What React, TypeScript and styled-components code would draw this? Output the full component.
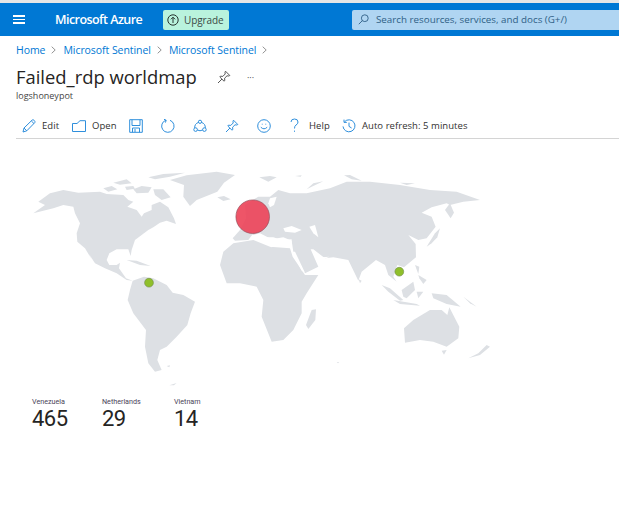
import styled, { createGlobalStyle } from "styled-components";

const GlobalStyle = createGlobalStyle`
    html, body {
        margin: 0;
        padding: 0;
        background: #fff;
    }
    body {
        font-family: "Open Sans", "Liberation Sans", sans-serif;
        color: #323130;
        overflow: hidden;
    }
`;

const Page = styled.div`
    width: 619px;
    height: 508px;
    border-top: 3px solid #e6e6e6;
    box-sizing: border-box;
    overflow: hidden;
`;

const TopBar = styled.header`
    height: 33px;
    background: #0078d4;
    display: flex;
    align-items: center;
`;

const Burger = styled.div`
    width: 12px;
    margin-left: 13px;
    display: flex;
    flex-direction: column;
    gap: 2px;

    span {
        height: 1.5px;
        background: #fff;
    }
`;

const Brand = styled.div`
    margin-left: 30px;
    width: 108px;
    font-family: "Open Sans", sans-serif;
    font-size: 12.5px;
    font-weight: 600;
    letter-spacing: -0.55px;
    color: #fff;
`;

const Upgrade = styled.div`
    width: 66px;
    height: 20px;
    box-sizing: border-box;
    padding-left: 4px;
    background: #b9f3dd;
    border-radius: 2px;
    display: flex;
    align-items: center;
    gap: 5px;
    font-size: 10px;
    letter-spacing: -0.1px;
    color: #3b4a46;
`;

const Search = styled.div`
    margin-left: 123px;
    flex: 1;
    height: 20px;
    background: #b0d5f2;
    border-radius: 2px 0 0 2px;
    display: flex;
    align-items: center;
    padding-left: 6px;
    gap: 7px;
    font-size: 9.8px;
    color: #2f5f86;
`;

const Content = styled.main`
    padding-left: 16px;
`;

const Breadcrumbs = styled.nav`
    height: 28px;
    display: flex;
    align-items: center;
    font-size: 10.5px;
    letter-spacing: -0.06px;
    color: #0078d4;
`;

const Chevron = styled.svg`
    margin: 0 7px 0 6px;
`;

const TitleRow = styled.div`
    display: flex;
    align-items: center;
    height: 26px;
`;

const Title = styled.h1`
    margin: 0;
    width: 201px;
    font-size: 18.4px;
    font-weight: 400;
    line-height: 26px;
    color: #252423;
`;

const Ellipsis = styled.span`
    margin-left: 16px;
    font-size: 9px;
    line-height: 9px;
    color: #444;
`;

const Subtitle = styled.div`
    font-size: 9px;
    line-height: 11px;
    color: #444;
`;

const Toolbar = styled.div`
    margin-top: 14px;
    height: 23px;
    border-bottom: 1px solid #d4d4d4;
    display: flex;
    align-items: flex-start;
    padding: 0 0 0 6px;
`;

const ToolButton = styled.div<{ $width: number }>`
    width: ${(props) => props.$width}px;
    height: 21px;
    flex: none;
    display: flex;
    align-items: center;
    gap: 6px;
    font-size: 9.5px;
    letter-spacing: 0.05px;
    color: #323130;
    white-space: nowrap;
`;

const MapChart = styled.svg`
    display: block;
    margin: 11px 0 0 -16px;
`;

const Tiles = styled.div`
    display: flex;
    margin-top: 8px;
    padding-left: 16px;
    font-family: Roboto, "Open Sans", sans-serif;
`;

const Tile = styled.div<{ $width: number }>`
    width: ${(props) => props.$width}px;
`;

const TileLabel = styled.div`
    font-size: 7.2px;
    line-height: 8px;
    letter-spacing: -0.02px;
    color: #4a4458;
`;

const TileValue = styled.div`
    font-size: 22px;
    line-height: 26px;
    letter-spacing: -0.5px;
    color: #252423;
`;

const land = "#dde0e4";
const icon = { fill: "none", stroke: "#2f8fdc", strokeWidth: 1 };

// traced from the picture, coordinates are 3x page pixels
const westLand = [
    "40,190 75,165 55,155 90,130 130,120 175,128 240,125 260,132 310,135 325,150 340,155 322,170 350,180 365,200 372,190 395,180 395,165 420,155 445,172 462,205 468,222 440,212 420,218 400,232 385,240 345,270 335,300 332,318 325,298 290,298 268,310 260,330 268,345 290,345 300,338 297,355 318,385 338,392 320,390 290,370 255,355 225,340 207,312 215,328 195,295 172,275 170,250 180,220 165,190 160,170 130,165 100,175",
    "338,392 372,380 400,385 440,405 458,428 490,435 525,455 512,490 502,525 470,560 440,590 420,600 412,630 425,660 405,665 385,640 375,590 378,540 340,490 323,450 330,420",
    "450,90 500,76 590,65 645,75 612,98 592,125 530,150 510,168 490,140 492,105",
    "385,82 430,72 495,68 450,80 405,88",
    "250,115 275,108 292,118 265,125",
    "280,98 320,88 335,100 300,104",
    "340,118 365,108 395,112 385,128 350,130",
    "400,118 430,118 452,142 425,150 405,135",
    "315,110 340,108 345,116 320,120",
    "320,330 350,332 392,348 360,345",
    "592,142 612,138 632,148 610,153",
    "440,648 450,646 448,652",
    "448,706 470,699 462,706",
];

const eastLand = [
    "-90,345 -80,305 -50,280 10,270 60,290 120,295 128,320 165,375 205,375 170,430 155,455 155,490 130,540 100,570 65,575 35,500 40,450 20,410 -30,400 -70,400",
    "60,140 85,120 120,130 170,130 240,115 290,95 360,95 450,105 540,120 620,125 690,150 640,155 600,165 590,160 545,172 515,188 545,200 557,230 530,265 505,270 475,255 497,282 498,322 462,352 442,345 430,380 440,395 415,375 405,345 378,330 335,365 325,392 295,330 250,322 225,325 190,298 182,298 205,350 165,370 130,305 125,272 100,262 65,268 30,250 10,255 -10,245 -30,240 -12,205 -15,165 25,140",
    "-52,265 -30,240 10,250 -5,270 -45,272",
    "185,480 198,478 196,510 175,537 168,525",
    "462,535 490,510 540,480 575,480 592,495 598,472 628,530 625,565 590,590 550,575 510,570 465,578",
    "575,602 590,600 582,614",
    "655,625 685,610 710,585 720,590 690,615",
    "395,405 420,415 460,450 450,452 415,425",
    "430,450 500,462 510,467 450,462",
    "455,420 490,395 495,420 470,445 460,440",
    "500,425 520,425 505,445",
    "545,430 590,435 632,470 590,462 550,445",
    "495,345 508,350 505,372",
    "505,375 530,390 520,402 508,385",
    "640,440 680,470 660,460",
    "530,290 555,250 570,235 562,262 545,280",
    "585,180 600,160 612,188 602,205",
    "28,82 60,78 80,82 55,95",
    "170,118 190,100 220,94 185,110",
    "135,78 155,76 152,80",
    "282,76 300,75 335,92 305,88",
    "450,98 495,100 470,105",
    "326,388 335,392 330,400",
    "260,636 268,637 264,640",
];

// Black Sea, Caspian, Red Sea and the like, drawn over the land
const eastWater = [
    "100,235 125,228 155,240 135,248 105,245",
    "178,230 195,225 205,262 190,250",
    "125,305 135,305 165,368 155,362",
    "190,300 215,322 238,320 215,330",
    "30,262 70,262 95,270 125,268 125,278 95,278 65,292 45,280",
    "60,145 80,140 72,165 60,172 55,160",
];

const tiles = [
    { label: "Venezuela", value: "465", width: 70 },
    { label: "Netherlands", value: "29", width: 72 },
    { label: "Vietnam", value: "14", width: 60 },
];

function WorldMap() {
    return (
        <MapChart width="520" height="240" viewBox="0 150 520 240">
            <g transform="translate(20 150) scale(0.3333)" fill={land}>
                {westLand.map((points) => (
                    <polygon key={points} points={points} />
                ))}
            </g>
            <g transform="translate(250 150) scale(0.3333)">
                {eastLand.map((points) => (
                    <polygon key={points} points={points} fill={land} />
                ))}
                {eastWater.map((points) => (
                    <polygon key={points} points={points} fill="#fff" />
                ))}
            </g>
            <circle cx="252.7" cy="216.7" r="16.8" fill="#ec4258" fillOpacity="0.9" stroke="#8a4a55" strokeWidth="0.6" />
            <circle cx="149" cy="282.7" r="4.4" fill="#8fbf2a" stroke="#6f8a4a" strokeWidth="0.6" />
            <circle cx="399.3" cy="271.7" r="4.4" fill="#8fbf2a" stroke="#6f8a4a" strokeWidth="0.6" />
        </MapChart>
    );
}

function BreadcrumbChevron() {
    return (
        <Chevron width="5" height="8" viewBox="0 0 5 8">
            <path d="M0.7 0.7 L4.2 4 L0.7 7.3" fill="none" stroke="#777" strokeWidth="0.8" />
        </Chevron>
    );
}

function PinIcon({ color }: { color: string }) {
    return (
        <svg width="14" height="14" viewBox="0 0 14 14" fill="none" stroke={color} strokeWidth="1">
            <path d="M8.5 1.2 L12.8 5.5 L11.8 6 L10 5.8 L7.6 8.2 L7.8 10.6 L7 11.2 L2.8 7 L3.4 6.2 L5.8 6.4 L8.2 4 L8 2.2 Z" />
            <path d="M5 9 L1 13" />
        </svg>
    );
}

function App() {
    return (
        <Page>
            <GlobalStyle />
            <TopBar>
                <Burger>
                    <span />
                    <span />
                    <span />
                </Burger>
                <Brand>Microsoft Azure</Brand>
                <Upgrade>
                    <svg width="12" height="12" viewBox="0 0 12 12" fill="none" stroke="#26332f" strokeWidth="1">
                        <circle cx="6" cy="6" r="5.2" />
                        <path d="M6 9 V3.4 M3.9 5.3 L6 3.2 L8.1 5.3" />
                    </svg>
                    Upgrade
                </Upgrade>
                <Search>
                    <svg width="11" height="11" viewBox="0 0 11 11" fill="none" stroke="#2f5f86" strokeWidth="0.9">
                        <circle cx="6.8" cy="4.2" r="3.4" />
                        <path d="M4.4 6.6 L0.8 10.2" />
                    </svg>
                    Search resources, services, and docs (G+/)
                </Search>
            </TopBar>
            <Content>
                <Breadcrumbs>
                    Home
                    <BreadcrumbChevron />
                    Microsoft Sentinel
                    <BreadcrumbChevron />
                    Microsoft Sentinel
                    <BreadcrumbChevron />
                </Breadcrumbs>
                <TitleRow>
                    <Title>Failed_rdp worldmap</Title>
                    <PinIcon color="#555" />
                    <Ellipsis>···</Ellipsis>
                </TitleRow>
                <Subtitle>logshoneypot</Subtitle>
                <Toolbar>
                    <ToolButton $width={50}>
                        <svg width="14" height="14" viewBox="0 0 14 14" {...icon}>
                            <path d="M1 13 L2 9 L10.2 1 Q11.2 0.4 12.2 1.4 Q13.4 2.6 12.8 3.6 L4.8 11.8 Z M2 9 L4.8 11.8 M9.4 2 L12 4.6" />
                        </svg>
                        Edit
                    </ToolButton>
                    <ToolButton $width={57}>
                        <svg width="14" height="12" viewBox="0 0 14 12" {...icon}>
                            <path d="M0.5 3.5 H5 L8 0.7 H13.5 V11.5 H0.5 Z" />
                        </svg>
                        Open
                    </ToolButton>
                    <ToolButton $width={32}>
                        <svg width="14" height="14" viewBox="0 0 14 14" {...icon}>
                            <path d="M0.7 0.7 H13.3 V13.3 H0.7 Z M3 0.7 V6.5 H11 V0.7 M3.5 13.3 V9 H10.5 V13.3 M6 10 V13" />
                        </svg>
                    </ToolButton>
                    <ToolButton $width={32}>
                        <svg width="14" height="14" viewBox="0 0 14 14" {...icon}>
                            <path d="M5 1.2 A6.2 6.2 0 1 0 9 1.3 M3 0.3 L5.2 1.2 L4.4 3.6" />
                        </svg>
                    </ToolButton>
                    <ToolButton $width={32}>
                        <svg width="14" height="14" viewBox="0 0 14 14" {...icon}>
                            <circle cx="7" cy="2.8" r="1.6" />
                            <circle cx="2.6" cy="10.6" r="1.8" />
                            <circle cx="11.4" cy="10.6" r="1.8" />
                            <path d="M5.5 3.4 A5.6 5.6 0 0 0 1.7 9 M8.5 3.4 A5.6 5.6 0 0 1 12.3 9 M4.4 11 A5 5 0 0 0 9.6 11" />
                        </svg>
                    </ToolButton>
                    <ToolButton $width={32}>
                        <PinIcon color="#2f8fdc" />
                    </ToolButton>
                    <ToolButton $width={32}>
                        <svg width="14" height="14" viewBox="0 0 14 14" {...icon}>
                            <circle cx="7" cy="7" r="6.3" />
                            <path d="M3.8 8.2 Q7 11.4 10.2 8.2 M4.8 5.2 H5.6 M8.4 5.2 H9.2" />
                        </svg>
                    </ToolButton>
                    <ToolButton $width={53}>
                        <svg width="11" height="15" viewBox="0 0 11 15" {...icon} style={{ marginRight: 3 }}>
                            <path d="M2 4 Q2 1 5.5 1 Q9 1 9 4 Q9 6 7 7 Q5.5 8 5.5 10.5 M5.5 12.6 V13.8" />
                        </svg>
                        Help
                    </ToolButton>
                    <ToolButton $width={140}>
                        <svg width="14" height="14" viewBox="0 0 14 14" {...icon}>
                            <path d="M2.5 2.8 A6 6 0 1 1 1 7.4 M2 0.6 V3.4 H4.8 M7 3.6 V7.4 L9.6 9" />
                        </svg>
                        Auto refresh: 5 minutes
                    </ToolButton>
                </Toolbar>
                <WorldMap />
                <Tiles>
                    {tiles.map(({ label, value, width }) => (
                        <Tile key={label} $width={width}>
                            <TileLabel>{label}</TileLabel>
                            <TileValue>{value}</TileValue>
                        </Tile>
                    ))}
                </Tiles>
            </Content>
        </Page>
    );
}

export default App;
